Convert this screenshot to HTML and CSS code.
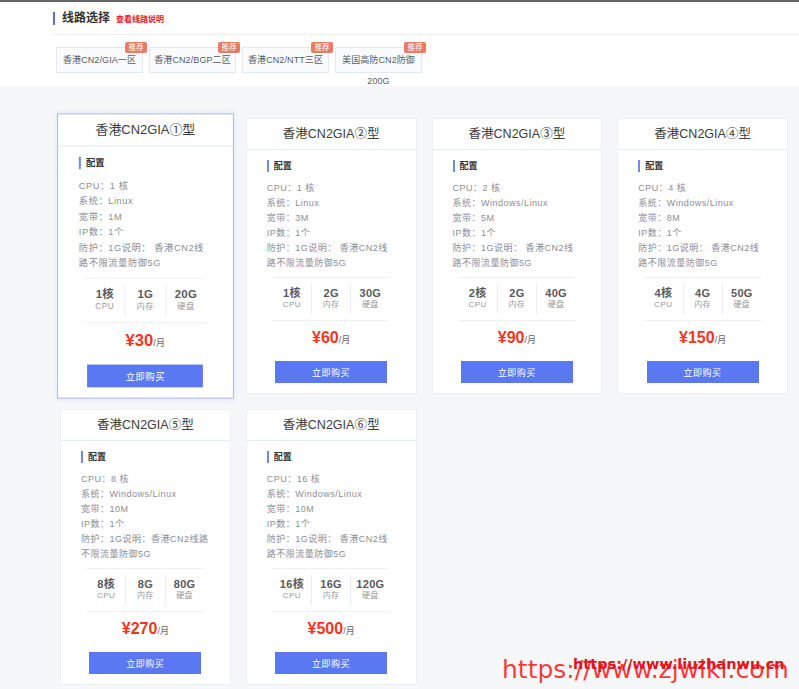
FILE: index.html
```html
<!DOCTYPE html>
<html lang="zh-CN">
<head>
    <meta charset="UTF-8">
    <meta name="viewport" content="width=device-width, initial-scale=1.0">
    <title>线路选择</title>
    <link rel="stylesheet" href="styles.css">
</head>
<body>
    <div class="top">
        <div class="section-head">
            <h2>线路选择</h2>
            <a class="help-link" href="#">查看线路说明</a>
        </div>
        <div class="tabs">
            <div class="tab">香港CN2/GIA一区<span class="badge">推荐</span></div>
            <div class="tab">香港CN2/BGP二区<span class="badge">推荐</span></div>
            <div class="tab">香港CN2/NTT三区<span class="badge">推荐</span></div>
            <div class="tab">美国高防CN2防御200G<span class="badge">推荐</span></div>
        </div>
    </div>

    <div class="main">
        <div class="plans">
            <div class="plan active">
                <div class="plan-title">香港CN2GIA①型</div>
                <div class="plan-body">
                    <div class="label">配置</div>
                    <ul class="specs">
                        <li>CPU：1 核</li>
                        <li>系统：Linux</li>
                        <li>宽带：1M</li>
                        <li>IP数：1个</li>
                        <li>防护：1G说明： 香港CN2线路不限流量防御5G</li>
                    </ul>
                    <div class="stats">
                        <div class="stat"><b>1核</b><span>CPU</span></div>
                        <div class="stat"><b>1G</b><span>内存</span></div>
                        <div class="stat"><b>20G</b><span>硬盘</span></div>
                    </div>
                    <div class="price"><em>¥30</em>/月</div>
                    <button class="buy">立即购买</button>
                </div>
            </div>
            <div class="plan">
                <div class="plan-title">香港CN2GIA②型</div>
                <div class="plan-body">
                    <div class="label">配置</div>
                    <ul class="specs">
                        <li>CPU：1 核</li>
                        <li>系统：Linux</li>
                        <li>宽带：3M</li>
                        <li>IP数：1个</li>
                        <li>防护：1G说明： 香港CN2线路不限流量防御5G</li>
                    </ul>
                    <div class="stats">
                        <div class="stat"><b>1核</b><span>CPU</span></div>
                        <div class="stat"><b>2G</b><span>内存</span></div>
                        <div class="stat"><b>30G</b><span>硬盘</span></div>
                    </div>
                    <div class="price"><em>¥60</em>/月</div>
                    <button class="buy">立即购买</button>
                </div>
            </div>
            <div class="plan">
                <div class="plan-title">香港CN2GIA③型</div>
                <div class="plan-body">
                    <div class="label">配置</div>
                    <ul class="specs">
                        <li>CPU：2 核</li>
                        <li>系统：Windows/Linux</li>
                        <li>宽带：5M</li>
                        <li>IP数：1个</li>
                        <li>防护：1G说明： 香港CN2线路不限流量防御5G</li>
                    </ul>
                    <div class="stats">
                        <div class="stat"><b>2核</b><span>CPU</span></div>
                        <div class="stat"><b>2G</b><span>内存</span></div>
                        <div class="stat"><b>40G</b><span>硬盘</span></div>
                    </div>
                    <div class="price"><em>¥90</em>/月</div>
                    <button class="buy">立即购买</button>
                </div>
            </div>
            <div class="plan">
                <div class="plan-title">香港CN2GIA④型</div>
                <div class="plan-body">
                    <div class="label">配置</div>
                    <ul class="specs">
                        <li>CPU：4 核</li>
                        <li>系统：Windows/Linux</li>
                        <li>宽带：8M</li>
                        <li>IP数：1个</li>
                        <li>防护：1G说明： 香港CN2线路不限流量防御5G</li>
                    </ul>
                    <div class="stats">
                        <div class="stat"><b>4核</b><span>CPU</span></div>
                        <div class="stat"><b>4G</b><span>内存</span></div>
                        <div class="stat"><b>50G</b><span>硬盘</span></div>
                    </div>
                    <div class="price"><em>¥150</em>/月</div>
                    <button class="buy">立即购买</button>
                </div>
            </div>
            <div class="plan">
                <div class="plan-title">香港CN2GIA⑤型</div>
                <div class="plan-body">
                    <div class="label">配置</div>
                    <ul class="specs">
                        <li>CPU：8 核</li>
                        <li>系统：Windows/Linux</li>
                        <li>宽带：10M</li>
                        <li>IP数：1个</li>
                        <li>防护：1G说明：香港CN2线路不限流量防御5G</li>
                    </ul>
                    <div class="stats">
                        <div class="stat"><b>8核</b><span>CPU</span></div>
                        <div class="stat"><b>8G</b><span>内存</span></div>
                        <div class="stat"><b>80G</b><span>硬盘</span></div>
                    </div>
                    <div class="price"><em>¥270</em>/月</div>
                    <button class="buy">立即购买</button>
                </div>
            </div>
            <div class="plan">
                <div class="plan-title">香港CN2GIA⑥型</div>
                <div class="plan-body">
                    <div class="label">配置</div>
                    <ul class="specs">
                        <li>CPU：16 核</li>
                        <li>系统：Windows/Linux</li>
                        <li>宽带：10M</li>
                        <li>IP数：1个</li>
                        <li>防护：1G说明： 香港CN2线路不限流量防御5G</li>
                    </ul>
                    <div class="stats">
                        <div class="stat"><b>16核</b><span>CPU</span></div>
                        <div class="stat"><b>16G</b><span>内存</span></div>
                        <div class="stat"><b>120G</b><span>硬盘</span></div>
                    </div>
                    <div class="price"><em>¥500</em>/月</div>
                    <button class="buy">立即购买</button>
                </div>
            </div>
        </div>
    </div>

    <div class="watermark big">https://www.zjwiki.com</div>
    <div class="watermark small">https://www.liuzhanwu.cn</div>
</body>
</html>
```

FILE: styles.css
```css
body {
    margin: 0;
    font-family: "Liberation Sans", "Noto Sans CJK SC", sans-serif;
    background-color: #f6f7f9;
    border-top: 2px solid #666;
    position: relative;
    min-height: 687px;
}
.top {
    background-color: #fff;
    padding-bottom: 13px;
}
.section-head {
    display: flex;
    align-items: center;
    margin-left: 53px;
    padding: 10px 0 9px;
    border-bottom: 1px solid #eef0f3;
    height: 13px;
}
.section-head h2 {
    margin: 0;
    padding-left: 7px;
    border-left: 2px solid #5d6fd6;
    font-size: 12px;
    line-height: 13px;
    color: #333;
}
.help-link {
    margin-left: 6px;
    font-size: 8px;
    font-weight: bold;
    color: #f0141e;
    text-decoration: none;
}
.tabs {
    display: flex;
    gap: 6px;
    margin: 12px 0 0 56px;
}
.tab {
    position: relative;
    box-sizing: border-box;
    width: 87px;
    height: 26px;
    padding: 2px 2px 0;
    border: 1px solid #e3e9f1;
    background-color: #f9fbfd;
    font-size: 9px;
    line-height: 21px;
    letter-spacing: 0.1px;
    color: #555b66;
    text-align: center;
}
.badge {
    position: absolute;
    top: -6px;
    right: -5px;
    width: 22px;
    height: 11px;
    border-radius: 2px;
    background-color: #ea7a63;
    color: #fff;
    font-size: 7.5px;
    line-height: 11px;
    letter-spacing: 0;
    text-align: center;
}
.main {
    padding: 32px 11px 0 60px;
}
.plans {
    display: grid;
    grid-template-columns: repeat(4, 1fr);
    gap: 15px;
}
.plan {
    box-sizing: border-box;
    height: 276px;
    background-color: #fff;
    border: 1px solid #eef0f5;
}
.plan.active {
    border-color: #a9b9f3;
    transform: scale(1.034);
    box-shadow: 0 0 6px rgba(90, 120, 240, 0.12);
}
.plan-title {
    height: 30px;
    line-height: 30px;
    border-bottom: 1px solid #e6ecf6;
    text-align: center;
    font-size: 12.5px;
    color: #3c3c3c;
}
.plan-body {
    padding: 10px 20px 0;
}
.label {
    padding-left: 5px;
    border-left: 2px solid #6d8cf2;
    font-size: 9px;
    font-weight: bold;
    line-height: 12px;
    color: #333;
}
.specs {
    list-style: none;
    margin: 9px 0 0;
    padding: 0;
    height: 96px;
    font-size: 9px;
    line-height: 15px;
    letter-spacing: 0.5px;
    color: #8b8e96;
}
.stats {
    display: flex;
    margin: 0 6px;
    padding: 6px 0;
    border-top: 1px solid #eef0f4;
    border-bottom: 1px solid #eef0f4;
}
.stat {
    flex: 1;
    height: 30px;
    padding-top: 3px;
    box-sizing: border-box;
    text-align: center;
    border-right: 1px solid #e8edf5;
}
.stat:last-child {
    border-right: none;
}
.stat b {
    display: block;
    font-size: 11px;
    line-height: 13px;
    color: #5a5a60;
    letter-spacing: 0.3px;
}
.stat span {
    display: block;
    font-size: 8px;
    line-height: 10px;
    color: #999;
    letter-spacing: 0.5px;
}
.price {
    margin-top: 6px;
    height: 22px;
    line-height: 22px;
    text-align: center;
    font-size: 9px;
    color: #666;
}
.price em {
    font-style: normal;
    font-weight: bold;
    font-size: 16px;
    color: #f4361e;
}
.buy {
    display: block;
    width: 112px;
    height: 22px;
    margin: 12px auto 0;
    border: none;
    background-color: #5a78f2;
    color: #fff;
    font-family: inherit;
    font-size: 9px;
    letter-spacing: 0.5px;
    cursor: pointer;
}
.watermark {
    position: absolute;
    white-space: nowrap;
    font-family: "DejaVu Sans", sans-serif;
}
.watermark.big {
    left: 502px;
    top: 653px;
    font-size: 25px;
    line-height: 30px;
    color: rgba(255, 20, 20, 0.85);
}
.watermark.small {
    left: 573px;
    top: 653px;
    font-size: 14.5px;
    line-height: 18px;
    font-weight: bold;
    color: #e5141c;
}
```
